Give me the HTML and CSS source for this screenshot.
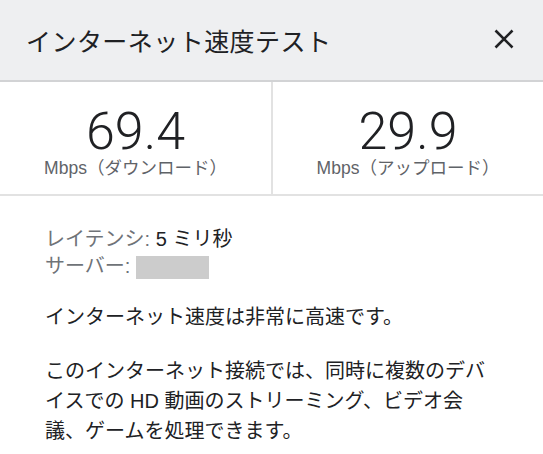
FILE: index.html
```html
<!DOCTYPE html>
<html lang="ja">
<head>
    <meta charset="UTF-8">
    <meta name="viewport" content="width=device-width, initial-scale=1.0">
    <title>インターネット速度テスト</title>
    <link rel="stylesheet" href="styles.css">
</head>
<body>
    <div class="panel">
        <div class="header">
            <h1>インターネット速度テスト</h1>
            <button class="close" aria-label="閉じる">
                <svg width="20" height="20" viewBox="0 0 20 20">
                    <path d="M1.5 1.5 L18.5 18.5 M18.5 1.5 L1.5 18.5" stroke="#202124" stroke-width="2.6" fill="none"/>
                </svg>
            </button>
        </div>
        <div class="stats">
            <div class="stat">
                <div class="value">69.4</div>
                <div class="unit">Mbps（ダウンロード）</div>
            </div>
            <div class="stat">
                <div class="value">29.9</div>
                <div class="unit">Mbps（アップロード）</div>
            </div>
        </div>
        <div class="details">
            <div class="meta">
                <div><span class="label">レイテンシ:</span> 5 ミリ秒</div>
                <div><span class="label">サーバー:</span> <span class="redacted"></span></div>
            </div>
            <p>インターネット速度は非常に高速です。</p>
            <p>このインターネット接続では、同時に複数のデバ<br>イスでの HD 動画のストリーミング、ビデオ会<br>議、ゲームを処理できます。</p>
        </div>
    </div>
</body>
</html>
```

FILE: styles.css
```css
body {
    margin: 0;
    background: #fff;
    font-family: "Liberation Sans", "Noto Sans CJK JP", sans-serif;
    color: #202124;
}

.panel {
    width: 543px;
    height: 454px;
    overflow: hidden;
}

.header {
    height: 80px;
    background-color: #eeeff1;
    border-bottom: 2px solid #d2d3d5;
    display: flex;
    justify-content: space-between;
    align-items: center;
    padding: 0 29px 0 26px;
}

h1 {
    margin: 0;
    font-size: 25px;
    font-weight: normal;
    letter-spacing: 0.45px;
}

.close {
    background: none;
    border: none;
    padding: 0;
    width: 20px;
    height: 20px;
    margin-bottom: 3px;
    cursor: pointer;
}

.stats {
    display: grid;
    grid-template-columns: 271px 1fr;
    height: 112px;
    border-bottom: 2px solid #e2e2e2;
}

.stat {
    text-align: center;
    padding-top: 24px;
}

.stat + .stat {
    border-left: 2px solid #e2e2e2;
}

.value {
    font-family: Roboto, "Liberation Sans", sans-serif;
    font-weight: 300;
    font-size: 52px;
    line-height: 52px;
    color: #202124;
}

.unit {
    font-size: 17.5px;
    line-height: 20px;
    color: #5f6368;
}

.details {
    padding: 30px 20px 0 45px;
    font-size: 20px;
}

.meta {
    line-height: 27px;
    margin-bottom: 22px;
}

.label {
    color: #6f7378;
}

.redacted {
    display: inline-block;
    width: 73px;
    height: 23px;
    background-color: #cccccc;
    vertical-align: -6px;
}

p {
    margin: 0 0 24px;
    line-height: 30px;
    white-space: nowrap;
}
```
